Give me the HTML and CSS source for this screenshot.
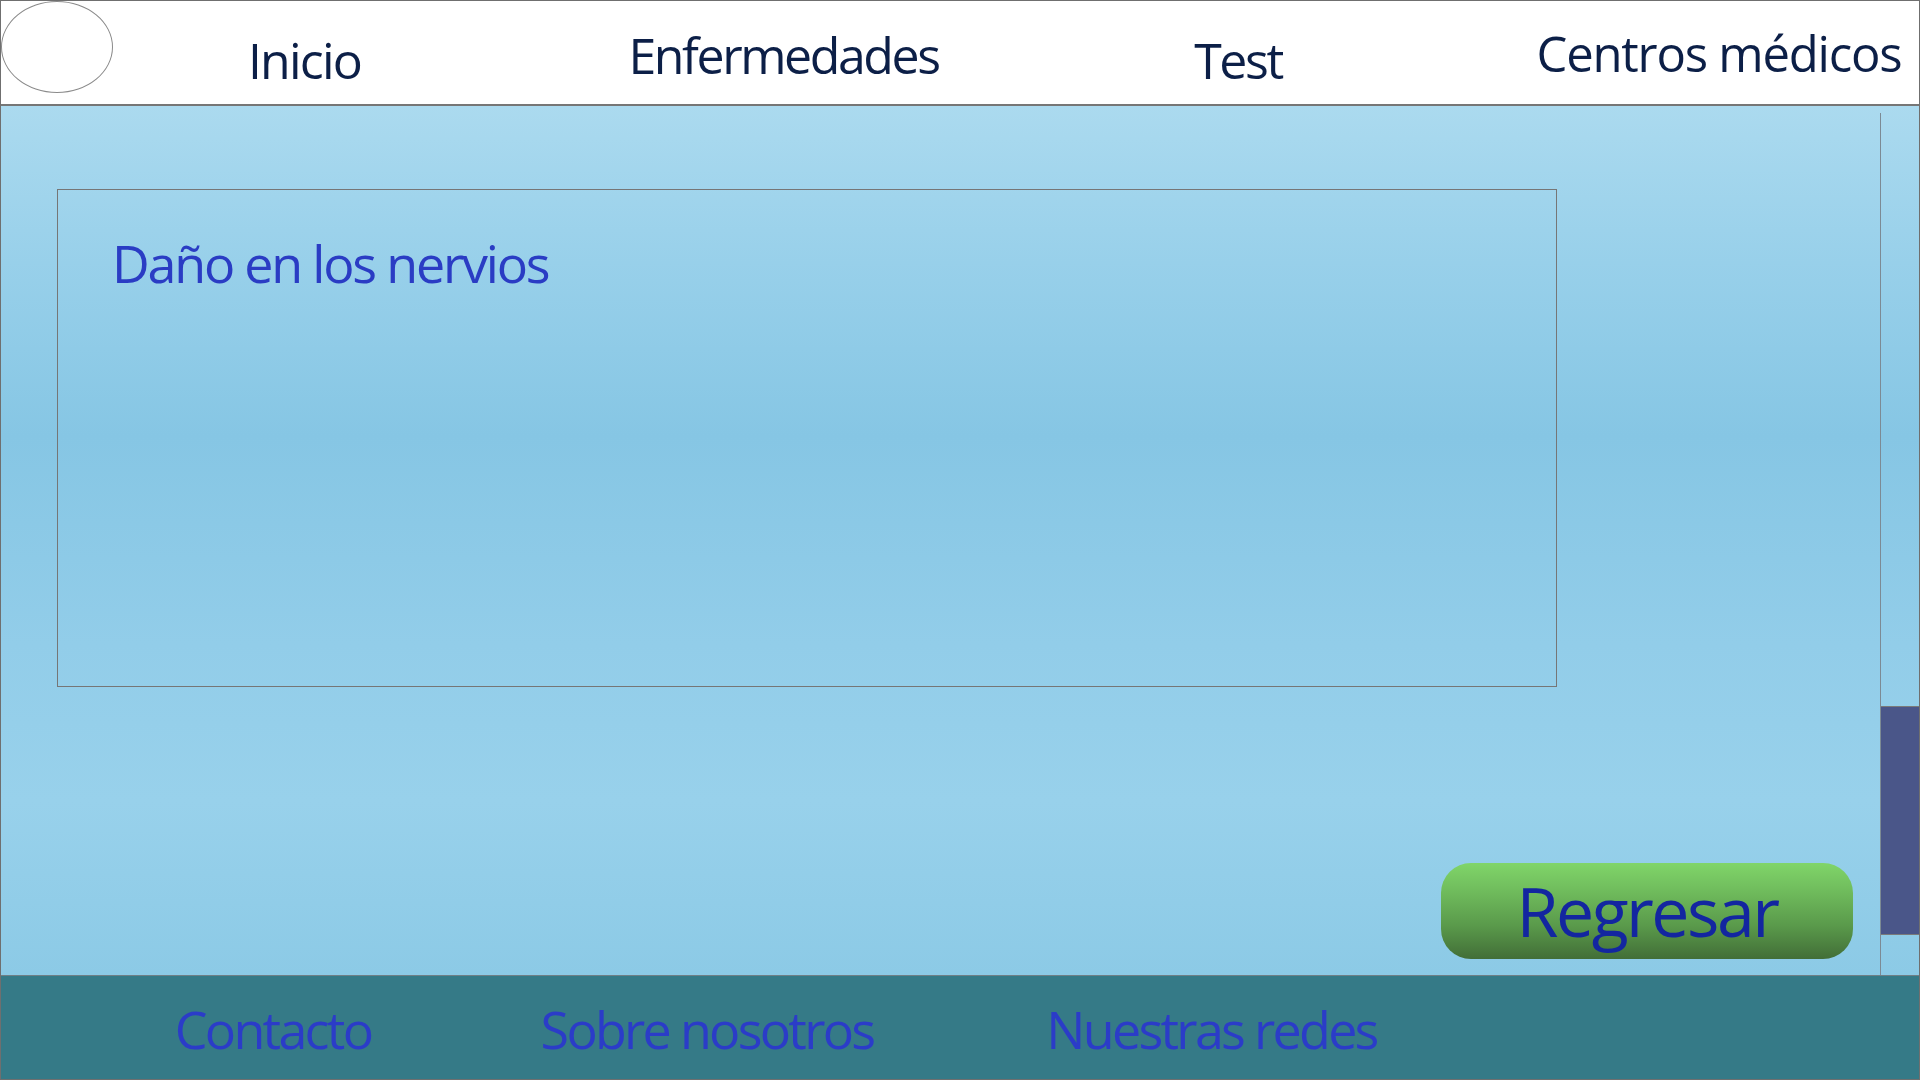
FILE: index.html
```html
<!DOCTYPE html>
<html lang="es">
<head>
<meta charset="utf-8">
<title>Daño en los nervios</title>
<link rel="stylesheet" href="styles.css">
</head>
<body>
<div class="page">
  <header class="topbar">
    <div class="logo"></div>
    <nav class="nav">
      <a class="nav-item nav-inicio">Inicio</a>
      <a class="nav-item nav-enf">Enfermedades</a>
      <a class="nav-item nav-test">Test</a>
      <a class="nav-item nav-centros">Centros médicos</a>
    </nav>
  </header>
  <main class="main">
    <div class="content">
      <section class="card">
        <h1 class="card-title">Daño en los nervios</h1>
      </section>
      <button class="back">Regresar</button>
    </div>
    <div class="scrollbar">
      <div class="track"><div class="thumb"></div></div>
    </div>
  </main>
  <footer class="footer">
    <a class="foot-item foot-1">Contacto</a>
    <a class="foot-item foot-2">Sobre nosotros</a>
    <a class="foot-item foot-3">Nuestras redes</a>
  </footer>
</div>
</body>
</html>
```
FILE: styles.css
```css
html, body {
  margin: 0;
  padding: 0;
}
body {
  font-family: "Open Sans", "Noto Sans", sans-serif;
  background: #ffffff;
}
.page {
  width: 1920px;
  height: 1080px;
  box-sizing: border-box;
  border: 1px solid #6f6f6f;
  display: flex;
  flex-direction: column;
  overflow: hidden;
}
.topbar {
  height: 105px;
  box-sizing: border-box;
  border-bottom: 2px solid #767676;
  background: #ffffff;
  display: flex;
  align-items: flex-start;
  flex: none;
}
.logo {
  width: 112px;
  height: 92px;
  box-sizing: border-box;
  border: 1px solid #8a8a8a;
  border-radius: 50%;
  flex: none;
}
.nav {
  display: flex;
  align-items: flex-start;
}
.nav-item {
  display: block;
  text-align: center;
  white-space: nowrap;
  color: #0c1f47;
  font-size: 50px;
  line-height: 1;
  letter-spacing: -2.4px;
}
.nav-inicio { width: 383px; padding-top: 34px; letter-spacing: -1.8px; }
.nav-enf { width: 575px; padding-top: 29px; }
.nav-test { width: 334px; padding-top: 34px; }
.nav-centros { width: 400px; margin-left: 114px; padding-top: 28px; font-size: 49px; letter-spacing: -1.2px; }

.main {
  flex: 1;
  display: flex;
  background: linear-gradient(to bottom, #abdaef 0%, #98d0ea 18%, #86c6e4 38%, #92cde9 62%, #98d1eb 80%, #8ccae6 100%);
}
.content {
  flex: 1;
  display: flex;
  flex-direction: column;
  align-items: flex-start;
  padding: 83px 0 16px 56px;
}
.card {
  width: 1500px;
  height: 498px;
  box-sizing: border-box;
  border: 1px solid #767676;
  padding: 47px 0 0 54px;
}
.card-title {
  margin: 0;
  font-weight: 400;
  font-size: 52px;
  line-height: 1;
  letter-spacing: -2.2px;
  color: #2a3cc4;
}
.back {
  align-self: flex-end;
  margin-top: auto;
  margin-right: 27px;
  width: 412px;
  height: 96px;
  border: none;
  border-radius: 30px;
  padding: 0;
  background: linear-gradient(to bottom, #80d569 0%, #6fbb5c 30%, #5a9a4b 65%, #426e37 100%);
  font-family: "Open Sans", "Noto Sans", sans-serif;
  font-size: 68px;
  line-height: 1;
  letter-spacing: -2.5px;
  color: #1326a0;
}
.scrollbar {
  width: 39px;
  flex: none;
  padding-top: 7px;
  display: flex;
}
.track {
  flex: 1;
  border-left: 1px solid #7c8a94;
}
.thumb {
  margin-top: 593px;
  height: 229px;
  box-sizing: border-box;
  border-top: 1px solid #7a7a7a;
  border-bottom: 1px solid #7a7a7a;
  background: #4a5689;
}
.footer {
  height: 104px;
  box-sizing: border-box;
  border-top: 1px solid #6f7f86;
  background: #357a87;
  display: flex;
  align-items: center;
  padding: 2px 0 0 100px;
  flex: none;
}
.foot-item {
  display: block;
  text-align: center;
  white-space: nowrap;
  font-size: 52px;
  line-height: 1;
  letter-spacing: -2.7px;
  color: #2b3cc8;
}
.foot-1 { width: 344px; }
.foot-2 { width: 524px; }
.foot-3 { width: 485px; }
```
